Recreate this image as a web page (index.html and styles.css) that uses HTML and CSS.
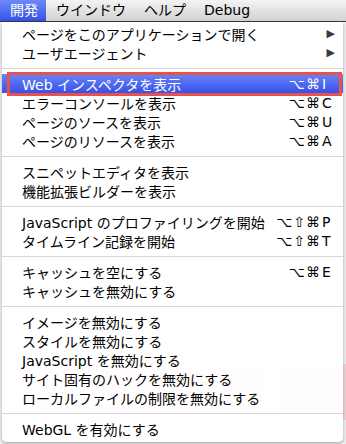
FILE: index.html
```html
<!DOCTYPE html>
<html lang="ja">
<head>
    <meta charset="UTF-8">
    <title>開発メニュー</title>
    <link rel="stylesheet" href="styles.css">
</head>
<body>
    <div class="menubar">
        <span class="menubar-item active">開発</span>
        <span class="menubar-item">ウインドウ</span>
        <span class="menubar-item">ヘルプ</span>
        <span class="menubar-item">Debug</span>
    </div>

    <div class="backdrop">
        <div class="ghost ghost-left"></div>
        <div class="ghost ghost-right"></div>
    </div>

    <div class="menu">
        <div class="item"><span>ページをこのアプリケーションで開く</span><span class="arrow">▶</span></div>
        <div class="item"><span>ユーザエージェント</span><span class="arrow">▶</span></div>
        <div class="sep"></div>
        <div class="item selected"><span>Web インスペクタを表示</span><span class="keys"><span class="mod">⌥⌘</span><span class="key">I</span></span></div>
        <div class="item"><span>エラーコンソールを表示</span><span class="keys"><span class="mod">⌥⌘</span><span class="key">C</span></span></div>
        <div class="item"><span>ページのソースを表示</span><span class="keys"><span class="mod">⌥⌘</span><span class="key">U</span></span></div>
        <div class="item"><span>ページのリソースを表示</span><span class="keys"><span class="mod">⌥⌘</span><span class="key">A</span></span></div>
        <div class="sep"></div>
        <div class="item"><span>スニペットエディタを表示</span></div>
        <div class="item"><span>機能拡張ビルダーを表示</span></div>
        <div class="sep"></div>
        <div class="item"><span>JavaScript のプロファイリングを開始</span><span class="keys"><span class="mod">⌥⇧⌘</span><span class="key">P</span></span></div>
        <div class="item"><span>タイムライン記録を開始</span><span class="keys"><span class="mod">⌥⇧⌘</span><span class="key">T</span></span></div>
        <div class="sep"></div>
        <div class="item"><span>キャッシュを空にする</span><span class="keys"><span class="mod">⌥⌘</span><span class="key">E</span></span></div>
        <div class="item"><span>キャッシュを無効にする</span></div>
        <div class="sep"></div>
        <div class="item"><span>イメージを無効にする</span></div>
        <div class="item"><span>スタイルを無効にする</span></div>
        <div class="item"><span>JavaScript を無効にする</span></div>
        <div class="item"><span>サイト固有のハックを無効にする</span></div>
        <div class="item"><span>ローカルファイルの制限を無効にする</span></div>
        <div class="sep"></div>
        <div class="item"><span>WebGL を有効にする</span></div>
    </div>
</body>
</html>
```

FILE: styles.css
```css
:root {
    --menu-font: "DejaVu Sans", "Noto Sans CJK JP", sans-serif;
    --select-top: #6b84f6;
    --select-bottom: #3551ea;
    --annotate-red: #e9524b;
}

body {
    margin: 0;
    padding: 0;
    width: 346px;
    height: 444px;
    overflow: hidden;
    background-color: #f2f2f2;
    font-family: var(--menu-font);
    font-size: 14px;
    color: #000;
    position: relative;
}

.menubar {
    height: 21px;
    display: flex;
    align-items: center;
    background: linear-gradient(#f4f4f4, #d2d2d2);
    border-bottom: 1px solid #3c3c3c;
}

.menubar-item {
    height: 21px;
    line-height: 21px;
    padding: 0 9px;
}

.menubar-item.active {
    color: #fff;
    background: linear-gradient(#6f89f7, #3452ea);
    padding: 0 8px 0 10px;
    margin-right: 1px;
}

/* faint page content behind the translucent menu */
.backdrop {
    position: absolute;
    top: 22px;
    left: 0;
    right: 0;
    bottom: 0;
}

.ghost {
    position: absolute;
    background-color: #f6d6d6;
}

.ghost-left {
    left: 40px;
    top: 342px;
    width: 222px;
    height: 56px;
}

.ghost-right {
    left: 276px;
    top: 342px;
    width: 70px;
    height: 56px;
}

.menu {
    position: relative;
    width: 341px;
    margin-left: 2px;
    padding: 2px 0 4px;
    background-color: rgba(255, 255, 255, 0.95);
    border-radius: 0 0 5px 5px;
    box-shadow: 0 2px 4px rgba(0, 0, 0, 0.3);
}

.item {
    height: 19px;
    display: flex;
    align-items: center;
    justify-content: space-between;
    padding: 0 10px 0 20px;
    white-space: nowrap;
}

.item.selected {
    position: relative;
    color: #fff;
    background: linear-gradient(var(--select-top), var(--select-bottom));
}

.item.selected::after {
    content: "";
    position: absolute;
    left: 5px;
    right: 1px;
    top: -2px;
    bottom: -3px;
    border: 3px solid var(--annotate-red);
}

.arrow {
    font-size: 11px;
    color: #3a3a3a;
    margin-right: -2px;
}

.keys {
    display: flex;
    font-size: 14px;
}

.mod {
    text-align: right;
    letter-spacing: 1px;
}

.key {
    width: 11px;
    margin-left: 1px;
}

.sep {
    height: 1px;
    margin: 6px 0 5px;
    background-color: #d8d8d8;
}
```
